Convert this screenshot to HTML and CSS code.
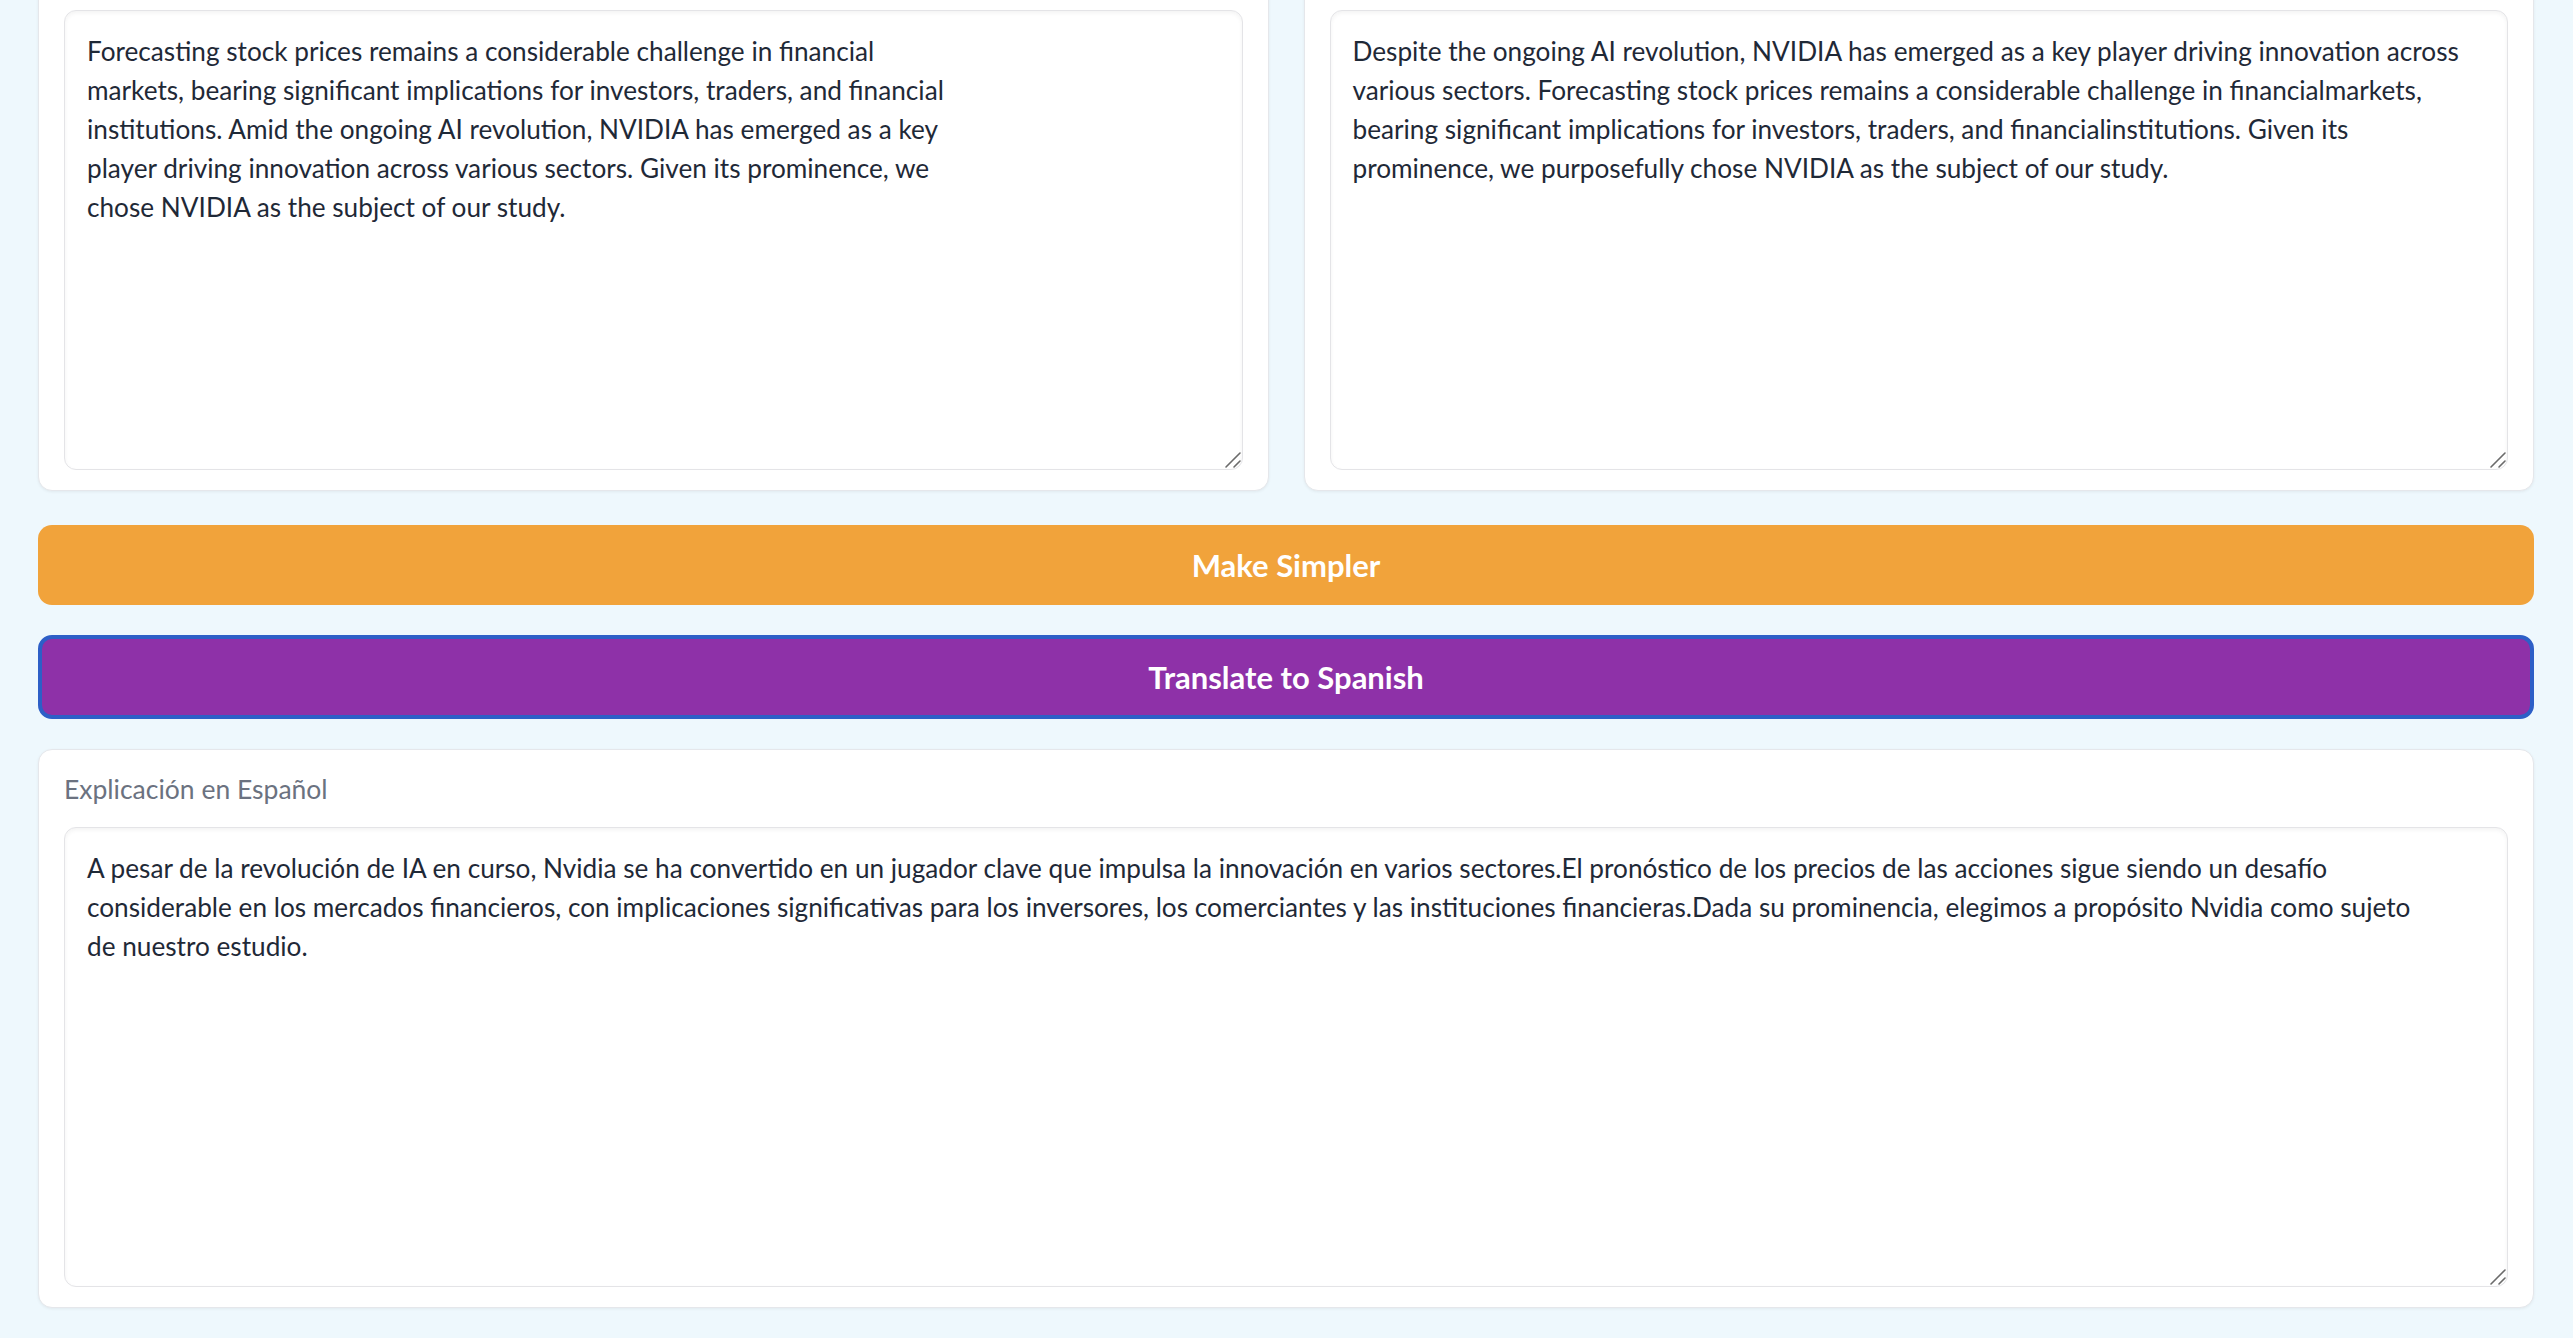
FILE: index.html
```html
<!DOCTYPE html>
<html lang="en">
<head>
<meta charset="utf-8">
<title>Make Simpler</title>
<link rel="stylesheet" href="styles.css">
</head>
<body>
<div class="page">
  <div class="row">
    <div class="card">
      <div class="field">
        <textarea class="box" readonly>Forecasting stock prices remains a considerable challenge in financial
markets, bearing significant implications for investors, traders, and financial
institutions. Amid the ongoing AI revolution, NVIDIA has emerged as a key
player driving innovation across various sectors. Given its prominence, we
chose NVIDIA as the subject of our study.</textarea>
        <svg class="grip" width="20" height="20" viewBox="0 0 20 20"><path d="M3 17 L17 3 M11 17 L17 11" stroke="#6b6b6b" stroke-width="1.6" stroke-linecap="round" fill="none"/></svg>
      </div>
    </div>
    <div class="card">
      <div class="field">
        <textarea class="box" readonly>Despite the ongoing AI revolution, NVIDIA has emerged as a key player driving innovation across
various sectors. Forecasting stock prices remains a considerable challenge in financialmarkets,
bearing significant implications for investors, traders, and financialinstitutions. Given its
prominence, we purposefully chose NVIDIA as the subject of our study.</textarea>
        <svg class="grip" width="20" height="20" viewBox="0 0 20 20"><path d="M3 17 L17 3 M11 17 L17 11" stroke="#6b6b6b" stroke-width="1.6" stroke-linecap="round" fill="none"/></svg>
      </div>
    </div>
  </div>
  <button class="btn btn-orange">Make Simpler</button>
  <button class="btn btn-purple">Translate to Spanish</button>
  <div class="card card-wide">
    <div class="label">Explicación en Español</div>
    <div class="field">
      <textarea class="box" readonly>A pesar de la revolución de IA en curso, Nvidia se ha convertido en un jugador clave que impulsa la innovación en varios sectores.El pronóstico de los precios de las acciones sigue siendo un desafío
considerable en los mercados financieros, con implicaciones significativas para los inversores, los comerciantes y las instituciones financieras.Dada su prominencia, elegimos a propósito Nvidia como sujeto
de nuestro estudio.</textarea>
      <svg class="grip" width="20" height="20" viewBox="0 0 20 20"><path d="M3 17 L17 3 M11 17 L17 11" stroke="#6b6b6b" stroke-width="1.6" stroke-linecap="round" fill="none"/></svg>
    </div>
  </div>
</div>
</body>
</html>
```
FILE: styles.css
```css
html, body {
  margin: 0;
  padding: 0;
  background: #eef8fd;
}

body {
  font-family: Lato, "Noto Sans", sans-serif;
  color: #1f2937;
}

.page {
  display: flex;
  flex-direction: column;
  padding: 0 39px 30px 38px;
  margin-top: -16px;
}

.row {
  display: flex;
  gap: 35px;
}

.card {
  flex: 1 1 0;
  min-width: 0;
  background: #ffffff;
  border: 1px solid #e5e7eb;
  border-radius: 14px;
  box-shadow: 0 1px 3px rgba(0, 0, 0, 0.06);
  padding: 25px 25px 20px;
}

.field {
  position: relative;
}

.box {
  display: block;
  width: 100%;
  height: 460px;
  box-sizing: border-box;
  margin: 0;
  padding: 21px 22px;
  border: 1px solid #e4e4e7;
  border-radius: 12px;
  background: #ffffff;
  box-shadow: inset 0 2px 4px rgba(0, 0, 0, 0.05);
  font-family: Lato, "Noto Sans", sans-serif;
  font-size: 26.2px;
  line-height: 39px;
  color: #1f2937;
  white-space: pre;
  overflow: hidden;
  outline: none;
  resize: none;
}

.grip {
  position: absolute;
  right: 0;
  bottom: 0;
  pointer-events: none;
}

.btn {
  display: flex;
  align-items: center;
  justify-content: center;
  width: 100%;
  box-sizing: border-box;
  border-radius: 14px;
  font-family: Lato, "Noto Sans", sans-serif;
  font-size: 31px;
  font-weight: 700;
  color: #ffffff;
  padding: 0;
}

.btn-orange {
  margin-top: 34px;
  height: 80px;
  background: #f1a33b;
  border: none;
}

.btn-purple {
  margin-top: 30px;
  height: 84px;
  background: #8e31a8;
  border: 4px solid #2d5fc7;
}

.card-wide {
  flex: none;
  margin-top: 30px;
}

.label {
  font-size: 26.5px;
  line-height: 29px;
  color: #6b7280;
  margin-bottom: 23px;
}
```
